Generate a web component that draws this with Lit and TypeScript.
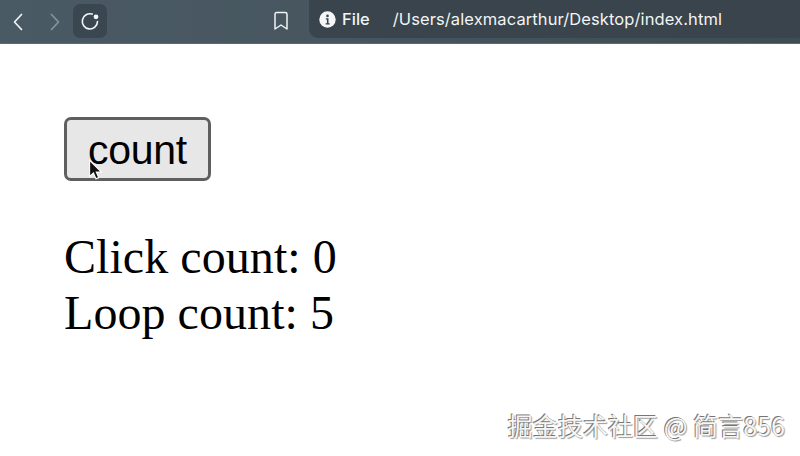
import { LitElement, html, css } from "lit";
import { customElement } from "lit/decorators.js";

@customElement("app-root")
export class AppRoot extends LitElement {
  static styles = css`
    :host { display: block; width: 800px; height: 456px; background: #fff; position: relative; overflow: hidden; font-family: "Liberation Serif", serif; }
    .bar { height: 44px; box-sizing: border-box; background: linear-gradient(90deg, #4a5a65 0%, #47565f 40%, #3f4c54 100%); border-bottom: 1px solid #5b6a73; display: flex; align-items: center; padding-left: 7px; position: relative; }
    .nav { width: 21px; height: 24px; display: flex; align-items: center; justify-content: center; }
    .back { margin-right: 16px; }
    .fwd { margin-right: 8px; }
    .reload { width: 34px; height: 34px; margin-top: -2px; border-radius: 7px; background: #3b4750; display: flex; align-items: center; justify-content: center; margin-right: 166px; }
    .book { width: 16px; height: 20px; margin-top: -2px; margin-right: 20px; display: flex; }
    .url { flex: 1; height: 38px; align-self: flex-start; border-radius: 0 0 0 9px; background: #39444c; display: flex; align-items: center; padding-left: 10px; color: #f2f4f5; font: 16.5px/38px "Inter", "Liberation Sans", sans-serif; }
    .info { width: 17px; height: 17px; margin-right: 6px; display: flex; }
    .file { font-weight: 500; margin-right: 23px; }
    .path { letter-spacing: 0.1px; white-space: nowrap; }
    .main { padding: 73px 0 0 64px; }
    button { display: block; box-sizing: border-box; width: 147px; height: 64px; padding: 2px 0 0; background: #e7e7e7; border: 3px solid #5f5f5f; border-radius: 7px; color: #000; font: 41px "Liberation Sans", Arial, sans-serif; letter-spacing: -0.3px; }
    .line { font-size: 48px; line-height: 56px; color: #000; white-space: nowrap; letter-spacing: 0.06px; }
    .lines { margin-top: 48px; }
    .cursor { position: absolute; left: 88px; top: 159px; width: 15px; height: 22px; }
    .mark { position: absolute; right: 15px; top: 410px; font: 25px/30px "Noto Sans CJK SC", "Liberation Sans", sans-serif; letter-spacing: 0.05px; color: #f6f6f6; white-space: nowrap; text-shadow: -1px -1px 0 #777, 1px 1px 1px #999; }
  `;

  render() {
    return html`
      <div class="bar">
        <div class="nav back"><svg width="14" height="20" viewBox="0 0 14 20" fill="none" stroke="#f1f3f4" stroke-width="1.7" stroke-linecap="round" stroke-linejoin="round"><path d="M10.5 2.5 3.5 10l7 7.5"/></svg></div>
        <div class="nav fwd"><svg width="14" height="20" viewBox="0 0 14 20" fill="none" stroke="#87939b" stroke-width="1.7" stroke-linecap="round" stroke-linejoin="round"><path d="M3.5 2.5 10.5 10l-7 7.5"/></svg></div>
        <div class="reload"><svg width="20" height="20" viewBox="0 0 20 20" fill="none"><path d="M12.2 3.1A7.6 7.6 0 1 0 17.5 10.6" stroke="#f4f6f7" stroke-width="1.6" stroke-linecap="round"/><circle cx="16" cy="5.8" r="2.4" fill="#f4f6f7"/></svg></div>
        <div class="book"><svg width="16" height="20" viewBox="0 0 16 20" fill="none" stroke="#f1f3f4" stroke-width="1.5" stroke-linejoin="round"><path d="M2 3.2Q2 1.5 3.7 1.5h8.6Q14 1.5 14 3.2V18L8 14l-6 4Z"/></svg></div>
        <div class="url">
          <span class="info"><svg width="17" height="17" viewBox="0 0 17 17"><circle cx="8.5" cy="8.5" r="8.2" fill="#f6f7f8"/><circle cx="8.5" cy="4.9" r="1.3" fill="#39444c"/><path d="M6.8 7.2h2.7v5h1.2v1.2H6.6v-1.2h1.3V8.4H6.8Z" fill="#39444c"/></svg></span>
          <span class="file">File</span>
          <span class="path">/Users/alexmacarthur/Desktop/index.html</span>
        </div>
      </div>
      <div class="main">
        <button>count</button>
        <div class="lines">
          <div class="line">Click count: 0</div>
          <div class="line">Loop count: 5</div>
        </div>
      </div>
      <svg class="cursor" viewBox="0 0 14 20"><path d="M1.5 1v15l3.6-3.2 2.3 5.4 2.6-1.1-2.3-5.2h4.8Z" fill="#111" stroke="#fff" stroke-width="1"/></svg>
      <div class="mark">掘金技术社区 @ 简言856</div>
    `;
  }
}
